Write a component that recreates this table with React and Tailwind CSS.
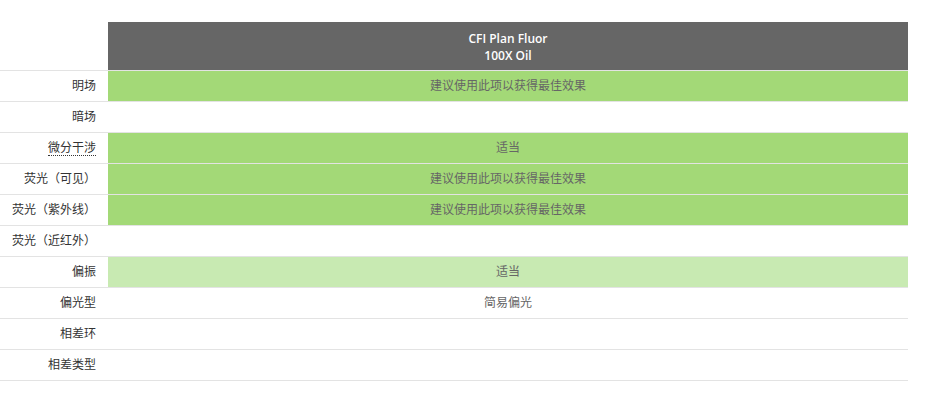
import React from "react";

const rows = [
  { label: "明场", value: "建议使用此项以获得最佳效果", tone: "best" },
  { label: "暗场", value: "", tone: "none" },
  { label: "微分干涉", value: "适当", tone: "best", abbr: true },
  { label: "荧光（可见）", value: "建议使用此项以获得最佳效果", tone: "best" },
  { label: "荧光（紫外线）", value: "建议使用此项以获得最佳效果", tone: "best" },
  { label: "荧光（近红外）", value: "", tone: "none" },
  { label: "偏振", value: "适当", tone: "ok" },
  { label: "偏光型", value: "简易偏光", tone: "none" },
  { label: "相差环", value: "", tone: "none" },
  { label: "相差类型", value: "", tone: "none" },
];

const toneClass = {
  best: "bg-[#a3d977]",
  ok: "bg-[#c8eab2]",
  none: "bg-white",
};

const App = () => {
  return (
    <div
      className="min-h-screen bg-white pt-[22px]"
      style={{ fontFamily: '"Open Sans", "Noto Sans CJK SC", sans-serif' }}
    >
      <div className="w-[908px]">
        {/* HEADER */}
        <div className="flex">
          <div className="w-[108px]" />
          <div className="flex-1 h-[48px] pt-px bg-[#666666] text-white text-[12px] font-semibold leading-[17px] flex flex-col items-center justify-center">
            <span>CFI Plan Fluor</span>
            <span>100X Oil</span>
          </div>
        </div>

        {/* ROWS */}
        {rows.map((row, index) => (
          <div
            key={index}
            className={`flex h-[31px] border-t border-[#e3e3e3] ${
              index === rows.length - 1 ? "border-b h-[32px]" : ""
            }`}
          >
            <div className="w-[108px] pr-3 flex items-center justify-end text-[12px] text-[#333333]">
              {row.abbr ? (
                <span className="border-b border-dotted border-[#333333] leading-[14px]">
                  {row.label}
                </span>
              ) : (
                <span>{row.label}</span>
              )}
            </div>
            <div
              className={`flex-1 flex items-center justify-center text-[12px] text-[#666666] ${toneClass[row.tone]}`}
            >
              {row.value}
            </div>
          </div>
        ))}
      </div>
    </div>
  );
};

export default App;
